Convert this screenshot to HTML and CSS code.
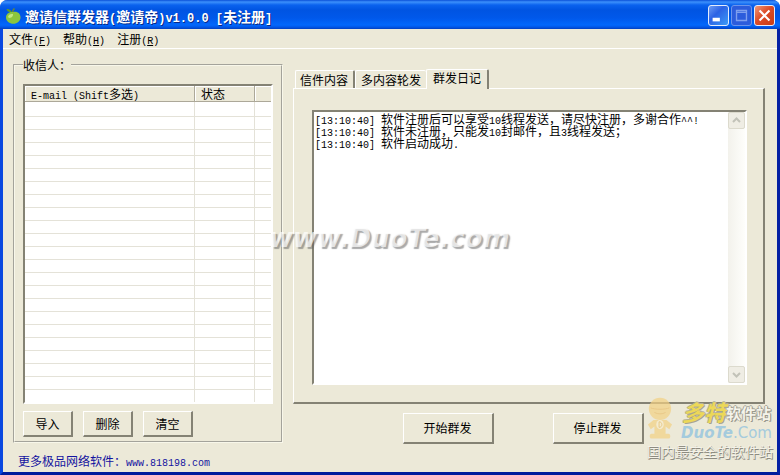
FILE: index.html
```html
<!DOCTYPE html>
<html lang="zh-CN">
<head>
<meta charset="utf-8">
<title>邀请信群发器(邀请帝)v1.0.0 [未注册]</title>
<link rel="stylesheet" href="styles.css">
</head>
<body>
<div class="window">
  <header class="titlebar">
    <svg class="app-icon" viewBox="0 0 16 16" aria-hidden="true">
      <path d="M7 4.500C6 2 4 0.500 1.500 1C2 3.500 4.500 5 7 4.500Z" fill="#5c9a2c"/>
      <path d="M7.500 4.500C7.500 3 8 1.500 9.500 0.500" stroke="#6c8a34" stroke-width="1.500" fill="none"/>
      <path d="M8 4C12.500 3 15.500 5.500 15.500 9.500C15.500 13 12 15.800 8.500 15.800C4.500 15.800 1 13 1 9.500C1 6 4 3.500 8 4Z" fill="#8cc63e"/>
      <path d="M3 9C3.500 6.500 5.500 5.500 8 6C8.500 8.500 5 11.500 3 9Z" fill="#c4e880"/>
    </svg>
    <h1 class="title">邀请信群发器<span class="mono">(</span>邀请帝<span class="mono">)v1.0.0 [</span>未注册<span class="mono">]</span></h1>
    <div class="caption-buttons">
      <button class="caption minimize" type="button" aria-label="最小化"><svg viewBox="0 0 21 21"><path d="M4 13h8v4H4z" fill="#fff"/></svg></button>
      <button class="caption maximize" type="button" aria-label="最大化" disabled><svg viewBox="0 0 21 21"><path d="M5 5h11v11H5zM5 7h11" stroke="#7f9fee" stroke-width="1.500" fill="none"/></svg></button>
      <button class="caption close" type="button" aria-label="关闭"><svg viewBox="0 0 21 21"><path d="M5 5L16 16M16 5L5 16" stroke="#fff" stroke-width="2.400"/></svg></button>
    </div>
  </header>
  <nav class="menubar">
    <button type="button">文件<span class="mono">(<u>F</u>)</span></button>
    <button type="button">帮助<span class="mono">(<u>H</u>)</span></button>
    <button type="button">注册<span class="mono">(<u>R</u>)</span></button>
  </nav>
  <main class="client">
    <fieldset class="recipients">
      <legend>收信人：</legend>
      <div class="list">
        <table>
          <colgroup><col class="col-mail"><col class="col-state"><col></colgroup>
          <thead><tr><th scope="col"><span class="mono">E-mail (Shift</span>多选<span class="mono">)</span></th><th scope="col">状态</th><td></td></tr></thead>
          <tbody>
            <tr><td></td><td></td><td></td></tr>
            <tr><td></td><td></td><td></td></tr>
            <tr><td></td><td></td><td></td></tr>
            <tr><td></td><td></td><td></td></tr>
            <tr><td></td><td></td><td></td></tr>
            <tr><td></td><td></td><td></td></tr>
            <tr><td></td><td></td><td></td></tr>
            <tr><td></td><td></td><td></td></tr>
            <tr><td></td><td></td><td></td></tr>
            <tr><td></td><td></td><td></td></tr>
            <tr><td></td><td></td><td></td></tr>
            <tr><td></td><td></td><td></td></tr>
            <tr><td></td><td></td><td></td></tr>
            <tr><td></td><td></td><td></td></tr>
            <tr><td></td><td></td><td></td></tr>
            <tr><td></td><td></td><td></td></tr>
            <tr><td></td><td></td><td></td></tr>
            <tr><td></td><td></td><td></td></tr>
            <tr><td></td><td></td><td></td></tr>
            <tr><td></td><td></td><td></td></tr>
            <tr><td></td><td></td><td></td></tr>
            <tr><td></td><td></td><td></td></tr>
            <tr><td></td><td></td><td></td></tr>
          </tbody>
        </table>
      </div>
      <div class="list-actions">
        <button class="btn" type="button">导入</button>
        <button class="btn" type="button">删除</button>
        <button class="btn" type="button">清空</button>
      </div>
    </fieldset>
    <section class="messages">
      <div class="tabs" role="tablist">
        <button class="tab" type="button" role="tab" aria-selected="false">信件内容</button>
        <button class="tab" type="button" role="tab" aria-selected="false">多内容轮发</button>
        <button class="tab active" type="button" role="tab" aria-selected="true">群发日记</button>
      </div>
      <div class="panel" role="tabpanel">
        <div class="log-box">
          <div class="log" role="log">
            <p><span class="mono">[13:10:40] </span>软件注册后可以享受<span class="mono">10</span>线程发送，请尽快注册，多谢合作<span class="mono">^^!</span></p>
            <p><span class="mono">[13:10:40] </span>软件未注册，只能发<span class="mono">10</span>封邮件，且<span class="mono">3</span>线程发送；</p>
            <p><span class="mono">[13:10:40] </span>软件启动成功<span class="mono">.</span></p>
          </div>
          <div class="scrollbar">
            <button type="button" aria-label="向上滚动" disabled><svg viewBox="0 0 15 15"><path d="M4 9L7.500 5.500L11 9" stroke="#c2c2b8" stroke-width="2" fill="none"/></svg></button>
            <button type="button" aria-label="向下滚动" disabled><svg viewBox="0 0 15 15"><path d="M4 6L7.500 9.500L11 6" stroke="#c2c2b8" stroke-width="2" fill="none"/></svg></button>
          </div>
        </div>
      </div>
      <div class="send-actions">
        <button class="btn large" type="button">开始群发</button>
        <button class="btn large" type="button">停止群发</button>
      </div>
    </section>
  </main>
  <footer class="footer"><a href="http://www.818198.com">更多极品网络软件：<span class="mono">www.818198.com</span></a></footer>
  <div class="site-mark">www.DuoTe.com</div>
  <div class="site-logo">
    <svg class="mascot" viewBox="0 0 28 46" aria-hidden="true">
      <g fill="#f3d184">
        <circle cx="14" cy="12" r="12"/>
        <path d="M7 24H21L27 29L24 34L20 31V40H8V31L4 34L1 29Z"/>
        <rect x="3" y="39" width="22" height="5" rx="2"/>
      </g>
      <path d="M4 11C8 13 20 13 24 11M8 16C12 18 16 18 20 16" stroke="#e6ba64" fill="none"/>
      <ellipse cx="14" cy="29" rx="4" ry="5" fill="#f8edcc"/>
      <path d="M13 26V32M13 26C17 26 17 32 13 32" stroke="#e3b85f" fill="none"/>
    </svg>
    <div class="logo-name"><span class="brand">多特</span><span class="kind">软件站</span></div>
    <div class="logo-domain"><b>DuoTe</b>.Com</div>
    <div class="logo-slogan">国内最安全的软件站</div>
  </div>
</div>
</body>
</html>
```
FILE: styles.css
```css
* { box-sizing: border-box; }

body {
  margin: 0;
  background: #fff;
  color: #000;
  font: 12px/16px "Noto Sans CJK SC", sans-serif;
  text-spacing-trim: space-all;
}

button { font: inherit; color: inherit; }

.mono {
  font-family: "Liberation Mono", monospace;
  font-size: 10px;
  line-height: 1px;
  white-space: pre;
}

.window {
  position: relative;
  display: flex;
  flex-direction: column;
  min-height: 100vh;
  border: 3px solid #0a2cc0;
  border-top: 0;
  border-left-color: #0a48e0;
  border-right-color: #0420a4;
  border-bottom-color: #001c9c;
  border-radius: 8px 8px 0 0;
  background: #ece9d8;
}

.titlebar {
  display: flex;
  align-items: center;
  height: 29px;
  margin: 0 -3px;
  padding: 2px 5px 0;
  border-radius: 7px 7px 0 0;
  background: linear-gradient(#0a50d8 0, #3c90fc 2px, #0a62ee 5px, #0054e2 10px, #0058ea 18px, #0268fc 25px, #0258e8 27px, #0240c0 29px);
}

.app-icon { width: 16px; height: 16px; }

.title {
  flex: 1;
  margin: 0 0 0 4px;
  color: #fff;
  font-size: 14px;
  line-height: 20px;
  text-shadow: 1px 1px 0 #0a2a86;
  white-space: nowrap;
}

.title .mono { font-size: 12px; }

.caption-buttons { display: flex; gap: 2px; }

.caption {
  width: 21px;
  height: 21px;
  padding: 0;
  border: 1px solid #e4ecfc;
  border-radius: 3px;
  background: linear-gradient(135deg, #6c9cf4, #2c62e4 40%, #3c9cf8);
}

.caption svg { display: block; width: 19px; height: 19px; }
.maximize { border-color: #6c94ec; background: #2c5cdc; }
.close { background: linear-gradient(135deg, #f09878, #dc4c28 45%, #c83c14); }

.menubar {
  display: flex;
  gap: 12px;
  height: 20px;
  padding: 1px 6px 0;
  border-bottom: 1px solid #fff;
}

.menubar button {
  padding: 0;
  border: 0;
  background: none;
  line-height: 16px;
}

.client {
  flex: 1;
  display: grid;
  grid-template-columns: 270px minmax(0, 1fr);
  gap: 10px;
  padding: 8px 12px 0 10px;
}

.recipients {
  display: flex;
  flex-direction: column;
  min-width: 0;
  margin: 0 0 1px;
  padding: 11px 8px 4px;
  border: 2px groove #f8f7ea;
}

.recipients legend { padding: 0; }

.list {
  height: 320px;
  overflow: hidden;
  border: 2px solid #fff;
  border-top-color: #848274;
  border-left-color: #848274;
  background: #fff;
}

.list table {
  width: 100%;
  border-collapse: separate;
  border-spacing: 0;
  table-layout: fixed;
}

.col-mail { width: 170px; }
.col-state { width: 60px; }

.list thead > tr > * {
  height: 16px;
  padding: 0 0 0 6px;
  border-right: 1px solid #aca899;
  border-bottom: 1px solid #aca899;
  box-shadow: inset 1px 1px 0 #fff;
  background: #ece9d8;
  font-weight: 400;
  line-height: 15px;
  text-align: left;
  white-space: nowrap;
}

.list thead > tr > :last-child { border-right: 0; }

.list tbody td {
  height: 13px;
  padding: 0;
  border-right: 1px solid #e4e2d8;
  border-bottom: 1px solid #e4e2d8;
}

.list tbody td:last-child { border-right: 0; }
.list tbody tr:first-child td { height: 15px; }

.list-actions {
  display: flex;
  gap: 10px;
  padding-top: 7px;
}

.btn {
  width: 50px;
  height: 26px;
  padding: 0;
  border: 1px solid #fff;
  border-right: 2px solid #848274;
  border-bottom: 2px solid #848274;
  background: #ece9d8;
}

.btn.large { width: 91px; height: 31px; }

.messages {
  display: flex;
  flex-direction: column;
  padding-top: 12px;
}

.tabs {
  display: flex;
  align-items: flex-end;
  height: 20px;
  padding-left: 2px;
}

.tab {
  height: 18px;
  margin-bottom: 1px;
  padding: 0 5px 0 4px;
  border: 1px solid #fff;
  border-right: 2px solid #848274;
  border-bottom: 0;
  border-radius: 2px 2px 0 0;
  background: #ece9d8;
  line-height: 16px;
}

.tab:nth-child(2) { padding: 0 5px; border-right: 0; }

.tab.active {
  z-index: 1;
  height: 20px;
  margin-bottom: 0;
  padding: 0 6px 3px;
}

.panel {
  flex: 1;
  display: flex;
  margin-top: -1px;
  padding: 21px 16px 17px 18px;
  border: 1px solid #fff;
  border-right: 2px solid #848274;
  border-bottom: 2px solid #848274;
}

.log-box {
  flex: 1;
  display: flex;
  min-width: 0;
  border: 2px solid #fff;
  border-top-color: #848274;
  border-left-color: #848274;
  background: #fff;
}

.log {
  flex: 1;
  min-width: 0;
  padding: 1px;
  line-height: 12px;
}

.log p { margin: 0; }

.scrollbar {
  display: flex;
  flex-direction: column;
  justify-content: space-between;
  width: 17px;
  background: linear-gradient(90deg, #f3f2ec, #fefefb);
}

.scrollbar button {
  width: 17px;
  height: 17px;
  padding: 0;
  border: 1px solid #dcdacd;
  border-radius: 2px;
  background: #efede4;
}

.scrollbar svg { display: block; width: 15px; height: 15px; }

.send-actions {
  display: flex;
  justify-content: center;
  gap: 59px;
  padding: 9px 12px 0 0;
}

.footer { padding: 9px 15px 3px; }
.footer a { color: #1414a0; text-decoration: none; }

.site-mark {
  position: absolute;
  top: 223px;
  left: 266px;
  color: rgba(255, 255, 255, 0.7);
  font: italic bold 26px/30px "DejaVu Sans", sans-serif;
  text-shadow: 2px 2px 1px rgba(100, 100, 100, 0.55);
  pointer-events: none;
}

.site-logo {
  position: absolute;
  right: 0;
  bottom: 12px;
  width: 130px;
  pointer-events: none;
  white-space: nowrap;
}

.mascot {
  position: absolute;
  top: 0;
  left: 0;
  width: 26px;
  height: 44px;
  opacity: 0.7;
}

.logo-name {
  display: flex;
  align-items: center;
  height: 28px;
  padding: 0 0 0 35px;
  font-weight: 700;
}

.brand {
  color: #ecd858;
  font-size: 22px;
  font-style: italic;
  text-shadow: 1px 1px 0 #a7a48e, -1px 0 0 #b5b299, 0 -1px 0 #b5b299, 1px 0 0 #b5b299;
}

.kind {
  padding-top: 3px;
  color: #f4f3ea;
  font-size: 15px;
  text-shadow: 1px 1px 0 #9a988c, -1px 0 0 #a9a79a, 0 -1px 0 #a9a79a, 1px 0 0 #a9a79a;
}

.logo-domain {
  padding-left: 34px;
  color: #a5cbdd;
  font: 15px/17px "DejaVu Sans", sans-serif;
}

.logo-domain b { font-style: italic; }

.logo-slogan {
  color: #f4f2e8;
  font-size: 14px;
  font-weight: 400;
  line-height: 18px;
  text-shadow: 1px 1px 0 #8d8b80, 0 1px 0 #a3a196;
}
```
